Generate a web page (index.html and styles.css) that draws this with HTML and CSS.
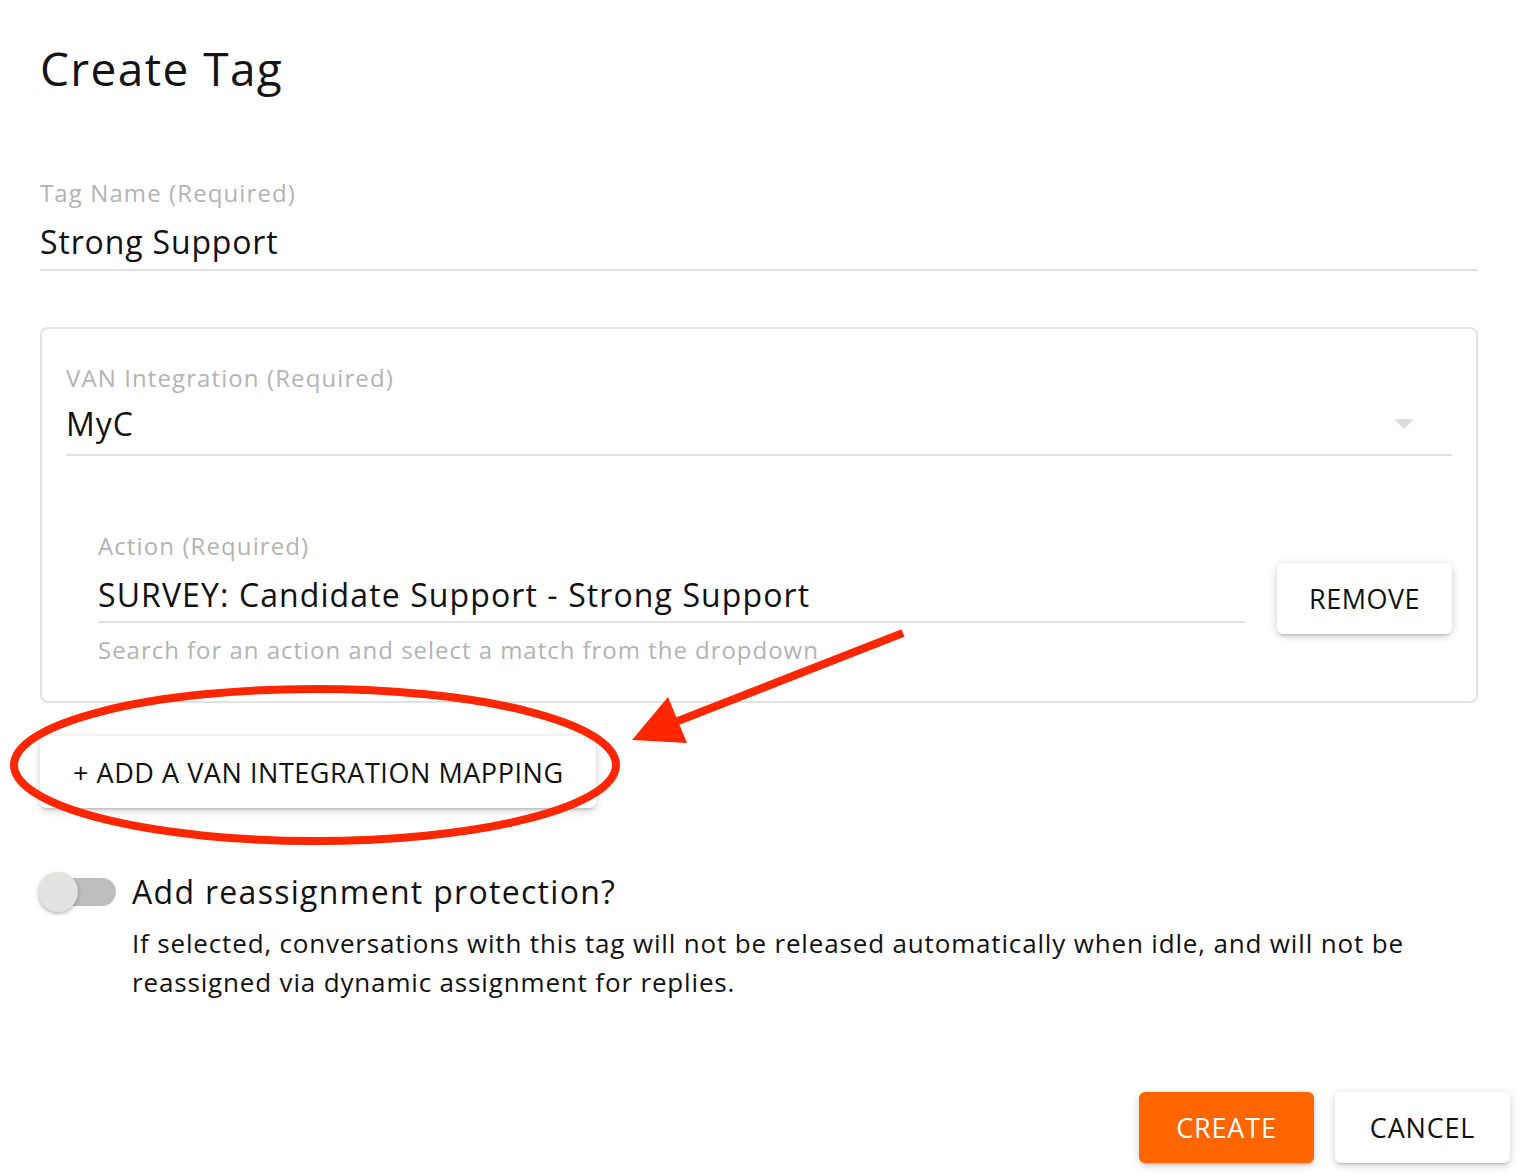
FILE: index.html
```html
<!DOCTYPE html>
<html>
<head>
<meta charset="utf-8">
<link rel="stylesheet" href="styles.css">
</head>
<body>
<div class="dialog">
  <h1 class="title">Create Tag</h1>

  <div class="field tag-field">
    <div class="label">Tag Name (Required)</div>
    <div class="value underline">Strong Support</div>
  </div>

  <div class="mapping">
    <div class="field select-field">
      <div class="label">VAN Integration (Required)</div>
      <div class="value underline select-value">
        <span>MyC</span>
        <span class="caret"></span>
      </div>
    </div>
    <div class="action-row">
      <div class="field action-field">
        <div class="label">Action (Required)</div>
        <div class="value underline">SURVEY: Candidate Support - Strong Support</div>
        <div class="helper">Search for an action and select a match from the dropdown</div>
      </div>
      <button class="btn btn-plain remove-btn">REMOVE</button>
    </div>
  </div>

  <button class="btn btn-plain add-btn">+ ADD A VAN INTEGRATION MAPPING</button>

  <div class="toggle-row">
    <div class="switch"><span class="track"></span><span class="thumb"></span></div>
    <div class="toggle-text">
      <div class="toggle-title">Add reassignment protection?</div>
      <p class="toggle-desc">If selected, conversations with this tag will not be released automatically when idle, and will not be reassigned via dynamic assignment for replies.</p>
    </div>
  </div>

  <div class="actions">
    <button class="btn btn-primary">CREATE</button>
    <button class="btn btn-plain">CANCEL</button>
  </div>
</div>

<svg class="annotation" width="1520" height="1176" viewBox="0 0 1520 1176">
  <ellipse cx="315" cy="765" rx="301" ry="76" fill="none" stroke="#ff2600" stroke-width="8"/>
  <line x1="903" y1="633" x2="660" y2="728" stroke="#ff2600" stroke-width="8"/>
  <polygon points="632,740 668,697 687,743" fill="#ff2600"/>
</svg>
</body>
</html>
```

FILE: styles.css
```css
html, body {
  margin: 0;
  padding: 0;
  background: #fff;
}
body {
  font-family: "Open Sans", "Noto Sans", sans-serif;
  color: #111;
  width: 1520px;
  height: 1176px;
  position: relative;
  overflow: hidden;
}
.dialog {
  padding: 36px 10px 0 40px;
}
.title {
  font-size: 46px;
  font-weight: 400;
  line-height: 64px;
  margin: 0;
  color: #141414;
  letter-spacing: 1.4px;
}
.field {
  display: flex;
  flex-direction: column;
}
.label {
  font-size: 24px;
  line-height: 30px;
  color: #b3b3b3;
  letter-spacing: 1.1px;
}
.value {
  font-size: 32px;
  line-height: 44px;
  color: #111;
  margin-top: 12px;
  padding-bottom: 4px;
  letter-spacing: 1px;
}
.underline {
  border-bottom: 2px solid #e2e2e2;
}
.tag-field {
  margin-top: 78px;
  margin-right: 32px;
}
.tag-field .value {
  letter-spacing: 0.85px;
  padding-bottom: 5px;
}
.mapping {
  margin-top: 56px;
  margin-right: 32px;
  border: 2px solid #e2e2e2;
  border-radius: 8px;
  padding: 34px 24px 36px 24px;
}
.select-value {
  display: flex;
  justify-content: space-between;
  align-items: center;
  margin-top: 9px;
  padding-bottom: 8px;
}
.caret {
  width: 0;
  height: 0;
  border-left: 10px solid transparent;
  border-right: 10px solid transparent;
  border-top: 10px solid #dcdcdc;
  margin-right: 38px;
}
.action-row {
  display: flex;
  align-items: flex-start;
  margin-top: 75px;
  padding-left: 32px;
  gap: 32px;
}
.action-field {
  flex: 1;
}
.action-field .value {
  letter-spacing: 1.1px;
}
.helper {
  font-size: 24px;
  line-height: 30px;
  color: #b3b3b3;
  margin-top: 12px;
  letter-spacing: 0.97px;
}
.btn {
  font-family: inherit;
  border: none;
  border-radius: 6px;
  font-size: 27px;
  height: 71px;
  cursor: pointer;
  background: #fff;
  color: #111;
  letter-spacing: 0.8px;
  box-shadow: 0 3px 3px -2px rgba(0,0,0,0.2), 0 3px 8px 0 rgba(0,0,0,0.12), 0 1px 10px 0 rgba(0,0,0,0.08);
}
.remove-btn {
  width: 175px;
  margin-top: 32px;
  flex: none;
  letter-spacing: 0.5px;
}
.add-btn {
  margin-top: 33px;
  width: 556px;
  text-align: left;
  padding: 0 0 0 33px;
  height: 72px;
  letter-spacing: 0.55px;
}
.toggle-row {
  display: flex;
  align-items: flex-start;
  margin-top: 60px;
  gap: 16px;
}
.switch {
  position: relative;
  width: 76px;
  height: 48px;
  flex: none;
}
.track {
  position: absolute;
  left: 4px;
  right: 0;
  top: 10px;
  height: 28px;
  border-radius: 14px;
  background: #bdbdbd;
}
.thumb {
  position: absolute;
  left: -2px;
  top: 4px;
  width: 40px;
  height: 40px;
  border-radius: 50%;
  background: #e2e3e1;
  box-shadow: 0 2px 3px rgba(0,0,0,0.2), 0 1px 6px rgba(0,0,0,0.1);
}
.toggle-title {
  font-size: 32px;
  line-height: 48px;
  letter-spacing: 1.3px;
}
.toggle-desc {
  margin: 8px 0 0;
  font-size: 26px;
  line-height: 39px;
  color: #111;
  max-width: 1340px;
  letter-spacing: 0.84px;
}
.actions {
  display: flex;
  justify-content: flex-end;
  gap: 21px;
  margin-top: 90px;
}
.actions .btn {
  width: 175px;
}
.btn-primary {
  background: #ff6600;
  color: #fff;
}
.annotation {
  position: absolute;
  left: 0;
  top: 0;
  pointer-events: none;
}
```
